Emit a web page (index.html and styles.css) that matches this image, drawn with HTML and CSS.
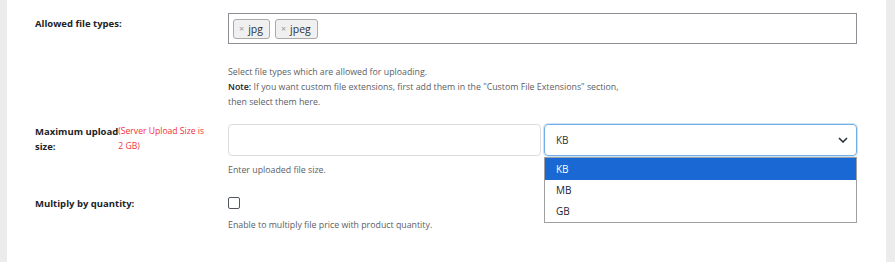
FILE: index.html
```html
<!DOCTYPE html>
<html>
<head>
<meta charset="utf-8">
<link rel="stylesheet" href="styles.css">
</head>
<body>
<div class="page">
  <div class="gutter-left"></div>
  <main class="panel">
    <div class="row row-types">
      <div class="label"><span class="label-text">Allowed file types:</span></div>
      <div class="field">
        <div class="tagbox">
          <span class="tag"><span class="tag-x">×</span>jpg</span>
          <span class="tag"><span class="tag-x">×</span>jpeg</span>
        </div>
        <p class="desc desc-types">Select file types which are allowed for uploading.<br><b>Note:</b> If you want custom file extensions, first add them in the "Custom File Extensions" section,<br>then select them here.</p>
      </div>
    </div>

    <div class="row row-size">
      <div class="label label-size">
        <span class="label-text label-wrap">Maximum upload<br>size:</span>
        <span class="server-note">(Server Upload Size is<br>2 GB)</span>
      </div>
      <div class="field">
        <div class="size-inputs">
          <div class="text-input"></div>
          <div class="select-wrap">
            <div class="select">
              <span>KB</span>
              <svg class="chev" width="10" height="6" viewBox="0 0 10 6"><path d="M1 1 L5 5 L9 1" fill="none" stroke="#2c3338" stroke-width="1.6"/></svg>
            </div>
            <ul class="dropdown">
              <li class="opt active">KB</li>
              <li class="opt">MB</li>
              <li class="opt">GB</li>
            </ul>
          </div>
        </div>
        <p class="desc desc-size">Enter uploaded file size.</p>
      </div>
    </div>

    <div class="row row-qty">
      <div class="label"><span class="label-text">Multiply by quantity:</span></div>
      <div class="field">
        <span class="checkbox"></span>
        <p class="desc desc-qty">Enable to multiply file price with product quantity.</p>
      </div>
    </div>
  </main>
  <div class="gutter-right"></div>
</div>
</body>
</html>
```

FILE: styles.css
```css
* { box-sizing: border-box; }
html, body { margin: 0; padding: 0; }
body {
  font-family: "Open Sans", "Noto Sans", "Liberation Sans", sans-serif;
  color: #1d2327;
  background: #fff;
}
.page {
  display: flex;
  width: 895px;
  height: 262px;
}
.gutter-left { width: 7px; background: #ececec; }
.gutter-right { width: 9px; background: #ececec; }
.panel {
  flex: 1;
  background: #fff;
  padding: 13px 29px 0 28px;
}
.row {
  display: grid;
  grid-template-columns: 193px 629px;
}
.label { font-size: 9.5px; font-weight: 700; line-height: 15px; }
.row-types .label { padding-top: 3px; }
.label-size { display: flex; }
.label-wrap { flex: 0 0 82px; white-space: nowrap; }
.server-note {
  flex: 0 0 92px;
  color: #f2303a;
  font-weight: 400;
  font-size: 8.6px;
  line-height: 15px;
  white-space: nowrap;
}
.field { position: relative; }
.tagbox {
  height: 31px;
  border: 1px solid #8c8f94;
  display: flex;
  align-items: center;
  gap: 5px;
  padding: 0 4px;
}
.tag {
  display: inline-flex;
  align-items: center;
  height: 20px;
  padding: 0 6px 0 5px;
  background: #f0f0f0;
  border: 1px solid #aaa;
  border-radius: 3px;
  font-size: 10.5px;
  color: #2c3338;
}
.tag-x { color: #999; font-size: 9px; margin-right: 4px; }
.desc {
  margin: 0;
  font-size: 8.8px;
  line-height: 15px;
  color: #5a6066;
}
.desc b { color: #1d2327; font-weight: 600; }
.desc-types { margin-top: 21px; }
.row-size { margin-top: 14px; }
.size-inputs { display: flex; gap: 3px; }
.text-input {
  width: 313px;
  height: 32px;
  border: 1px solid #dcdcde;
  border-radius: 4px;
}
.select-wrap { position: relative; width: 313px; }
.select {
  height: 32px;
  border: 1px solid #72aee6;
  border-radius: 4px;
  box-shadow: 0 0 0 1px #cfe3f7;
  display: flex;
  align-items: center;
  justify-content: space-between;
  padding: 0 8px 0 11px;
  font-size: 10px;
  color: #2c3338;
}
.dropdown {
  position: absolute;
  top: 33px;
  left: 0;
  width: 313px;
  margin: 0;
  padding: 0;
  list-style: none;
  background: #fff;
  border: 1px solid #a0a0a0;
  z-index: 2;
}
.opt {
  height: 21px;
  line-height: 21px;
  padding-left: 11px;
  font-size: 10px;
  color: #1d2327;
}
.opt.active { background: #1a68d4; color: #fff; height: 22px; line-height: 22px; }
.desc-size { margin-top: 7px; }
.row-qty { margin-top: 18px; }
.checkbox {
  display: block;
  width: 12px;
  height: 12px;
  margin-top: 1px;
  border: 1px solid #50575e;
  border-radius: 2px;
}
.desc-qty { margin-top: 9px; }
```
